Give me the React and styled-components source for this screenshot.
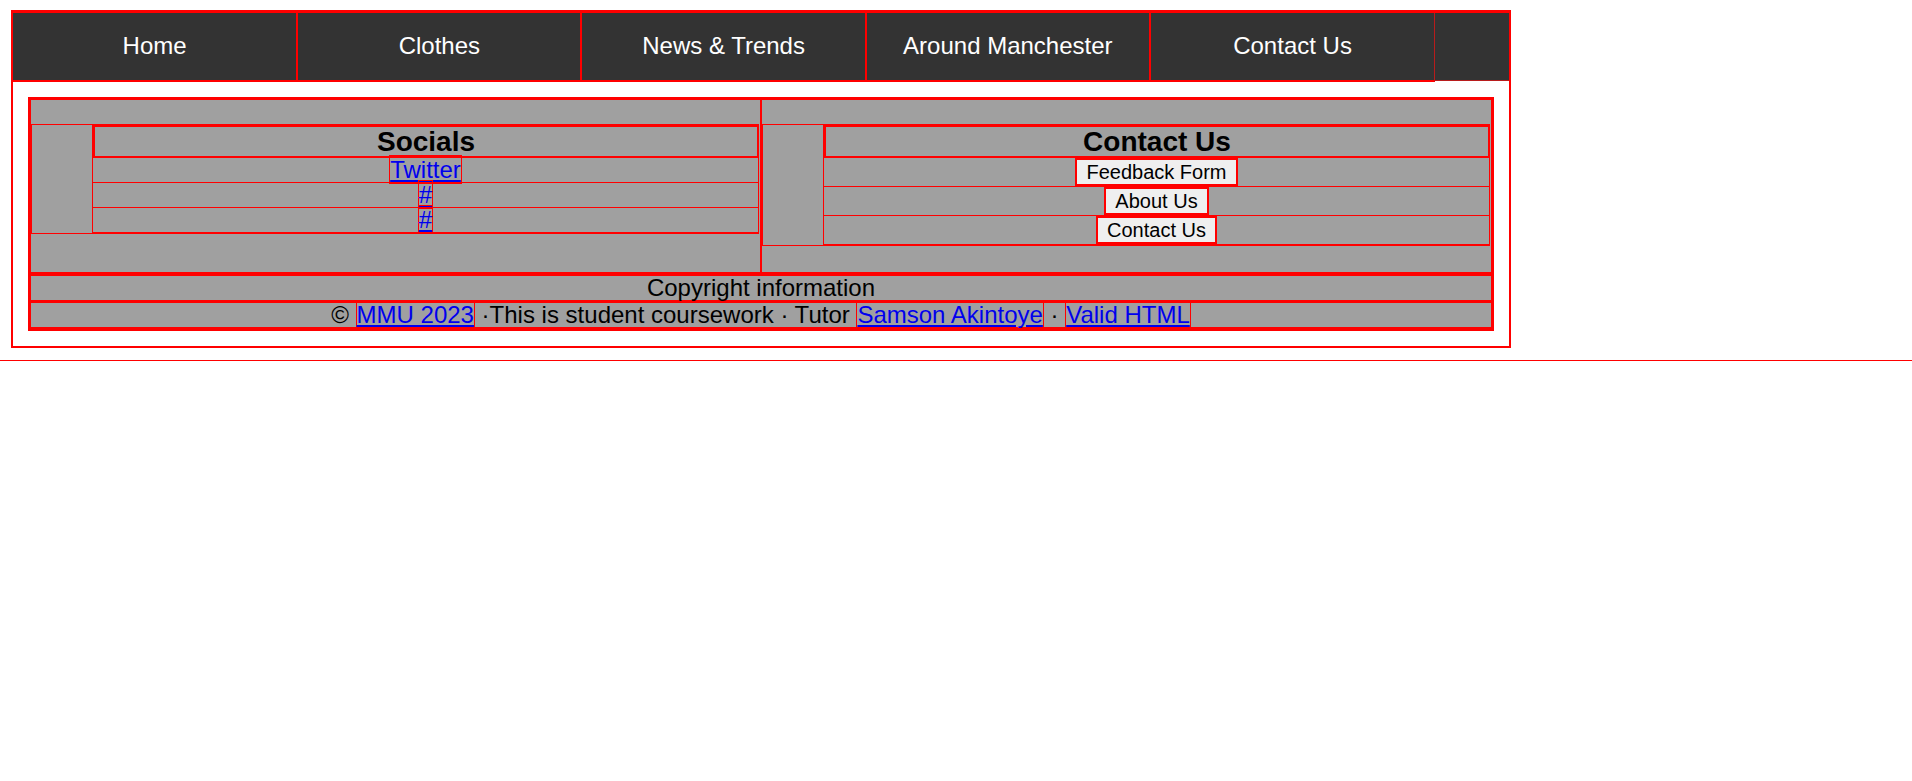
import React from "react";
import styled, { createGlobalStyle } from "styled-components";

const GlobalStyle = createGlobalStyle`
  html, body {
    margin: 0;
    padding: 0;
    background: #fff;
  }
  body {
    font-family: "Liberation Sans", Arial, sans-serif;
    color: #000;
  }
`;

const Page = styled.div`
  padding: 10px 0 12px 11px;
  border-bottom: 1px solid red;
`;

const Wrapper = styled.div`
  box-sizing: border-box;
  width: 1500px;
  border: 2px solid red;
`;

const NavBar = styled.ul`
  display: flex;
  align-items: flex-start;
  margin: 0;
  padding: 0;
  list-style: none;
  border-top: 1px solid red;
`;

const NavItem = styled.li`
  box-sizing: border-box;
  width: ${(p) => (p.$first ? "calc(19% + 1px)" : "19%")};
  height: 69px;
  padding-bottom: 1px;
  display: flex;
  align-items: center;
  justify-content: center;
  background: #333;
  color: #fff;
  font-size: 24px;
  border-bottom: 2px solid red;
  border-right: ${(p) => (p.$last ? "1px solid #b81c1c" : "2px solid red")};
`;

const NavFiller = styled.li`
  box-sizing: border-box;
  flex: 1;
  height: 68px;
  background: #333;
  border-bottom: 1px solid #b81c1c;
`;

const Content = styled.div`
  padding: 15px;
`;

const Footer = styled.footer`
  border: 3px solid red;
  background: #a0a0a0;
`;

const TopRow = styled.div`
  display: grid;
  grid-template-columns: 1fr 1fr;
  column-gap: 2px;
  background: red;
  border-bottom: 4px solid red;
`;

const Cell = styled.div`
  display: flex;
  align-items: flex-start;
  padding: 24px 1px 26px 0;
  background: #a0a0a0;
`;

const NestedTable = styled.div`
  flex: 1;
  display: flex;
  border: 1px solid red;
  border-right: none;
`;

const SideCell = styled.div`
  flex: 0 0 60px;
  border-right: 1px solid red;
`;

const Rows = styled.div`
  flex: 1;
  display: flex;
  flex-direction: column;
`;

const Heading = styled.h2`
  margin: 0;
  border: 2px solid red;
  font-size: 28px;
  font-weight: bold;
  line-height: 29px;
  text-align: center;
`;

const LinkRow = styled.div`
  height: 24px;
  border-right: 1px solid red;
  border-bottom: 1px solid red;
  font-size: 24px;
  line-height: 24px;
  text-align: center;
`;

const ButtonRow = styled.div`
  height: 28px;
  display: flex;
  align-items: center;
  justify-content: center;
  border-right: 1px solid red;
  border-bottom: 1px solid red;
`;

const Button = styled.button`
  font-family: "Liberation Sans", Arial, sans-serif;
  font-size: 20px;
  line-height: 22px;
  padding: 1px 9px;
  color: #000;
  background: #efefef;
  border: 2px solid red;
  cursor: pointer;
`;

const TextRow = styled.div`
  height: 24px;
  font-size: 24px;
  line-height: 24px;
  text-align: center;
  white-space: nowrap;
  border-bottom: ${(p) => p.$border}px solid red;
`;

const Link = styled.a`
  color: #0000ee;
  text-decoration: underline;
  border: 1px solid red;
`;

const navLinks = ["Home", "Clothes", "News & Trends", "Around Manchester", "Contact Us"];

export default function App() {
  return (
    <>
      <GlobalStyle />
      <Page>
        <Wrapper>
          <NavBar>
            {navLinks.map((label, i) => (
              <NavItem key={label} $first={i === 0} $last={i === navLinks.length - 1}>
                {label}
              </NavItem>
            ))}
            <NavFiller />
          </NavBar>
          <Content>
            <Footer>
              <TopRow>
                <Cell>
                  <NestedTable>
                    <SideCell />
                    <Rows>
                      <Heading>Socials</Heading>
                      <LinkRow>
                        <Link href="#">Twitter</Link>
                      </LinkRow>
                      <LinkRow>
                        <Link href="#">#</Link>
                      </LinkRow>
                      <LinkRow>
                        <Link href="#">#</Link>
                      </LinkRow>
                    </Rows>
                  </NestedTable>
                </Cell>
                <Cell>
                  <NestedTable>
                    <SideCell />
                    <Rows>
                      <Heading>Contact Us</Heading>
                      <ButtonRow>
                        <Button>Feedback Form</Button>
                      </ButtonRow>
                      <ButtonRow>
                        <Button>About Us</Button>
                      </ButtonRow>
                      <ButtonRow>
                        <Button>Contact Us</Button>
                      </ButtonRow>
                    </Rows>
                  </NestedTable>
                </Cell>
              </TopRow>
              <TextRow $border={3}>Copyright information</TextRow>
              <TextRow $border={1}>
                © <Link href="#">MMU 2023</Link> ·This is student coursework · Tutor{" "}
                <Link href="#">Samson Akintoye</Link> · <Link href="#">Valid HTML</Link>
              </TextRow>
            </Footer>
          </Content>
        </Wrapper>
      </Page>
    </>
  );
}
